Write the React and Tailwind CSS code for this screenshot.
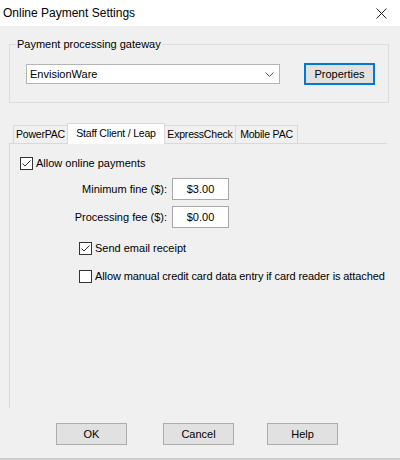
import { useState } from "react";

const tabs = [
  { label: "PowerPAC", w: "w-[55px]" },
  { label: "Staff Client / Leap", w: "w-[98px]" },
  { label: "ExpressCheck", w: "w-[72px]" },
  { label: "Mobile PAC", w: "w-[63px]" },
];

function CheckBox({ checked, label }) {
  return (
    <label className="flex items-center gap-[3px] whitespace-nowrap">
      <span className="flex h-[13px] w-[13px] shrink-0 items-center justify-center border border-[#333333] bg-white">
        {checked ? (
          <svg width="11" height="11" viewBox="0 0 11 11">
            <polyline points="1.5,5.5 4,8 9.5,2.5" fill="none" stroke="#333333" strokeWidth="1" />
          </svg>
        ) : null}
      </span>
      <span className="leading-[13px]">{label}</span>
    </label>
  );
}

function Button({ children, focused }) {
  return (
    <button
      className={`flex h-[22px] w-[71px] items-center justify-center bg-[#e1e1e1] ${
        focused ? "border border-[#0078d7] shadow-[inset_0_0_0_1px_#0078d7]" : "border border-[#adadad]"
      }`}
    >
      {children}
    </button>
  );
}

export default function App() {
  const [active, setActive] = useState(1);

  return (
    <div className="flex h-[460px] w-[400px] flex-col border-b-2 border-[#cdcdcd] bg-[#f0f0f0] font-['Liberation_Sans',Arial,sans-serif] text-[11px] text-black">
      <div className="flex h-[26px] shrink-0 items-center justify-between bg-white pl-[3px] pr-[13px] text-[12px]">
        <span>Online Payment Settings</span>
        <svg width="11" height="11" viewBox="0 0 11 11">
          <path d="M0.5 0.5 L10.5 10.5 M10.5 0.5 L0.5 10.5" stroke="#222" strokeWidth="1" />
        </svg>
      </div>

      <div className="ml-[9px] mt-[18px] flex h-[59px] w-[380px] flex-col border border-[#dcdcdc]">
        <span className="-mt-[7px] ml-[6px] w-fit bg-[#f0f0f0] px-[1px] leading-[13px]">Payment processing gateway</span>
        <div className="mt-[12px] flex items-center pl-[16px]">
          <div className="flex h-[20px] w-[254px] items-center justify-between border border-[#b4b4b4] bg-white pl-[3px] pr-[5px]">
            <span>EnvisionWare</span>
            <svg width="9" height="5" viewBox="0 0 9 5">
              <polyline points="0.5,0.5 4.5,4.5 8.5,0.5" fill="none" stroke="#555" strokeWidth="1" />
            </svg>
          </div>
          <div className="ml-[24px]">
            <Button focused>Properties</Button>
          </div>
        </div>
      </div>

      <div className="ml-[14px] mt-[20px] flex h-[20px] items-end whitespace-nowrap text-[10.5px] tracking-[-0.2px]">
        {tabs.map((tab, i) =>
          i === active ? (
            <button
              key={tab.label}
              onClick={() => setActive(i)}
              className={`relative z-10 -mb-px -ml-px flex h-[21px] items-start justify-center border border-b-0 border-[#d9d9d9] bg-white pt-[2px] ${tab.w}`}
            >
              {tab.label}
            </button>
          ) : (
            <button
              key={tab.label}
              onClick={() => setActive(i)}
              className={`-ml-px flex h-[18px] items-center justify-center border border-b-0 border-[#d9d9d9] bg-[#f0f0f0] ${tab.w}`}
            >
              {tab.label}
            </button>
          )
        )}
      </div>

      <div className="ml-[9px] flex h-[265px] w-[378px] flex-col border-l border-t border-[#d9d9d9] pl-[10px] pt-[13px]">
        <CheckBox checked label="Allow online payments" />

        <div className="mt-[8px] flex items-center">
          <span className="w-[147px] text-right">Minimum fine ($):</span>
          <div className="ml-[5px] flex h-[22px] w-[57px] items-center justify-center border border-[#a8a8a8] bg-white">$3.00</div>
        </div>
        <div className="mt-[6px] flex items-center">
          <span className="w-[147px] text-right">Processing fee ($):</span>
          <div className="ml-[5px] flex h-[22px] w-[57px] items-center justify-center border border-[#a8a8a8] bg-white">$0.00</div>
        </div>

        <div className="ml-[59px] mt-[14px]">
          <CheckBox checked label="Send email receipt" />
        </div>
        <div className="ml-[59px] mt-[15px] tracking-[-0.1px]">
          <CheckBox label="Allow manual credit card data entry if card reader is attached" />
        </div>
      </div>

      <div className="mt-[15px] flex pl-[56px]">
        <Button>OK</Button>
        <div className="ml-[36px]">
          <Button>Cancel</Button>
        </div>
        <div className="ml-[33px]">
          <Button>Help</Button>
        </div>
      </div>
    </div>
  );
}
